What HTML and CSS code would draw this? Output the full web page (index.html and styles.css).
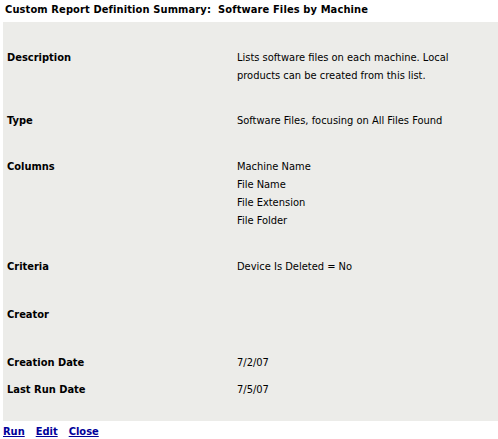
FILE: index.html
```html
<!DOCTYPE html>
<html>
<head>
<meta charset="utf-8">
<link rel="stylesheet" href="styles.css">
</head>
<body>
<div class="title">Custom Report Definition Summary:&nbsp; Software Files by Machine</div>
<div class="panel">
  <div class="row">
    <div class="label">Description</div>
    <div class="value">Lists software files on each machine. Local products can be created from this list.</div>
  </div>
  <div class="row">
    <div class="label">Type</div>
    <div class="value">Software Files, focusing on All Files Found</div>
  </div>
  <div class="row">
    <div class="label">Columns</div>
    <div class="value">Machine Name<br>File Name<br>File Extension<br>File Folder</div>
  </div>
  <div class="row">
    <div class="label">Criteria</div>
    <div class="value">Device Is Deleted = No</div>
  </div>
  <div class="row shift2">
    <div class="label">Creator</div>
    <div class="value"></div>
  </div>
  <div class="row shift1">
    <div class="label">Creation Date</div>
    <div class="value">7/2/07</div>
  </div>
  <div class="row tight">
    <div class="label">Last Run Date</div>
    <div class="value">7/5/07</div>
  </div>
</div>
<div class="links">
  <a href="#">Run</a>
  <a href="#">Edit</a>
  <a href="#">Close</a>
</div>
</body>
</html>
```
FILE: styles.css
```css
body {
  margin: 0;
  padding: 0 0 0 3px;
  font-family: "DejaVu Sans Condensed", "DejaVu Sans", sans-serif;
  font-size: 11px;
  color: #000;
  background: #fff;
}
.title {
  font-weight: bold;
  height: 22px;
  line-height: 20px;
  padding-left: 2px;
  letter-spacing: 0.12px;
}
.panel {
  background: #ecece9;
  padding: 27px 0 22px 4px;
  display: flex;
  flex-direction: column;
  gap: 28px;
}
.row {
  display: grid;
  grid-template-columns: 230px 240px;
  line-height: 18px;
  min-height: 18px;
}
.row:nth-child(2) {
  margin-top: -1px;
}
.row.shift2 {
  margin-top: 2px;
}
.row.shift1 {
  margin-top: 2px;
}
.row.tight {
  margin-top: -19px;
}
.label {
  font-weight: bold;
}
.links {
  display: flex;
  gap: 11px;
  padding-left: 0;
  line-height: 22px;
}
.links a {
  color: #000099;
  font-weight: bold;
  text-decoration: underline;
}
```
